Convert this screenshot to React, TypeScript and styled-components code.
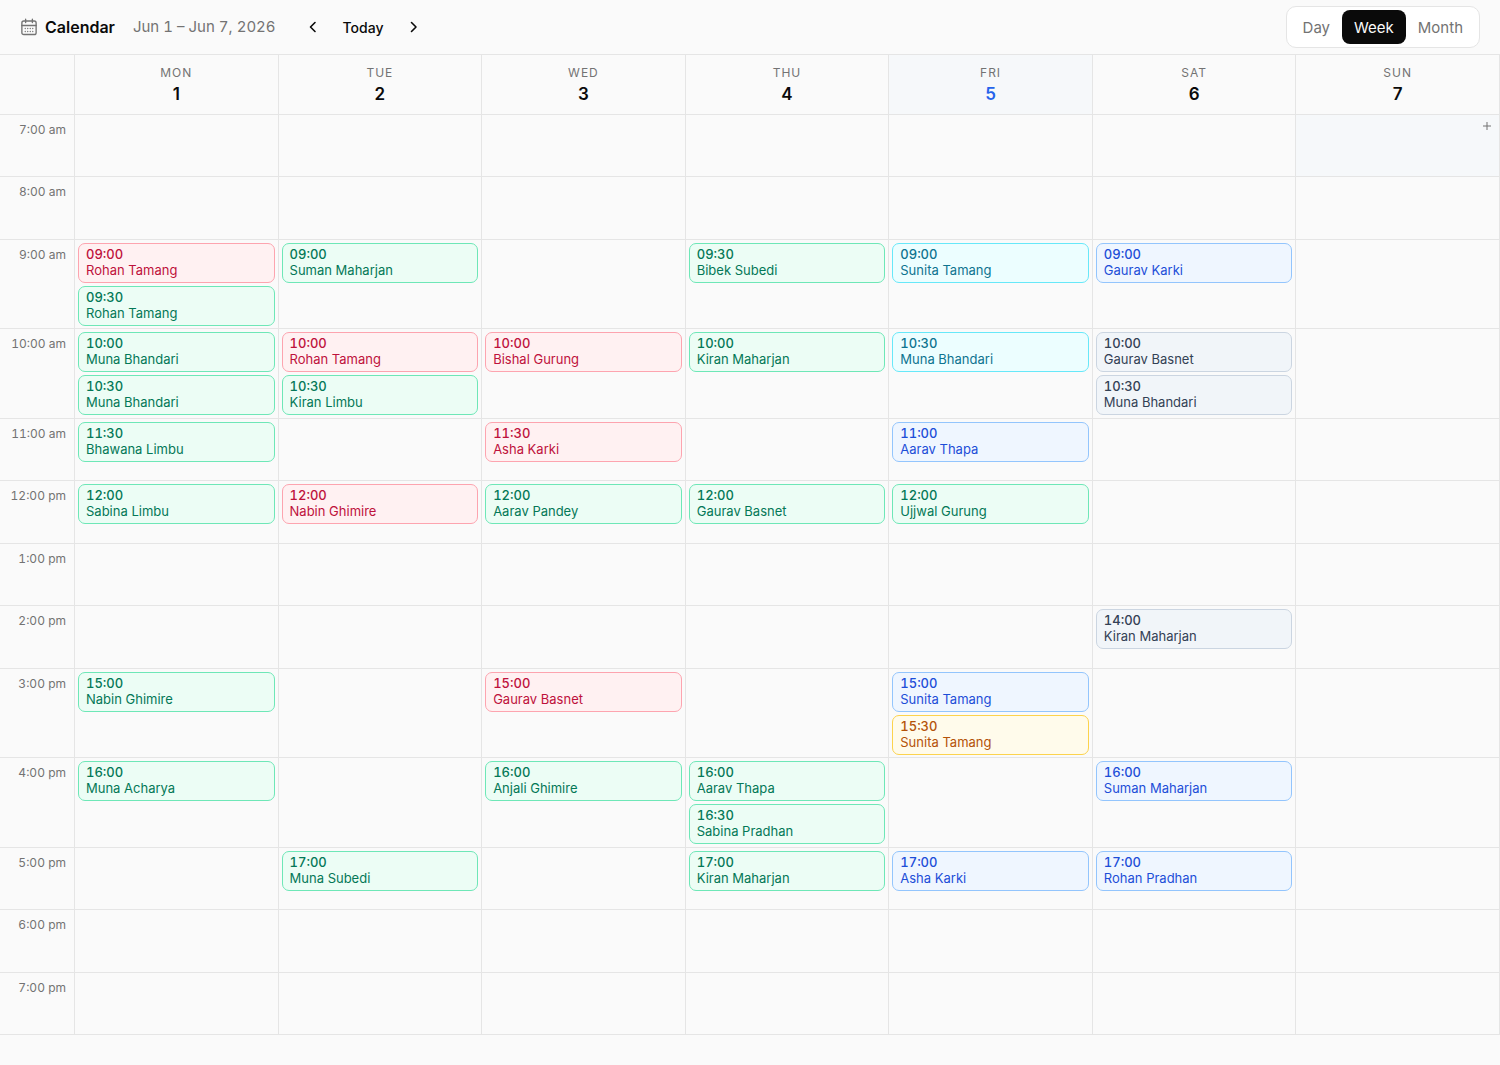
import React from "react";
import styled, { createGlobalStyle } from "styled-components";

const GlobalStyle = createGlobalStyle`
  *, *::before, *::after { box-sizing: border-box; }
  body {
    margin: 0;
    background: #fafafa;
    color: #0a0a0a;
    font-family: Inter, "Liberation Sans", sans-serif;
    font-size: 13px;
    -webkit-font-smoothing: antialiased;
  }
  button { font: inherit; color: inherit; }
`;

type Tone = "rose" | "emerald" | "cyan" | "blue" | "slate" | "amber";

const tones: Record<Tone, { bg: string; border: string; text: string }> = {
  rose: { bg: "#fff1f2", border: "#fda4af", text: "#be123c" },
  emerald: { bg: "#ecfdf5", border: "#6ee7b7", text: "#047857" },
  cyan: { bg: "#ecfeff", border: "#67e8f9", text: "#0e7490" },
  blue: { bg: "#eff6ff", border: "#93c5fd", text: "#1d4ed8" },
  slate: { bg: "#f1f5f9", border: "#cbd5e1", text: "#334155" },
  amber: { bg: "#fffbeb", border: "#fcd34d", text: "#b45309" },
};

const Page = styled.main`
  display: flex;
  flex-direction: column;
  min-height: 100vh;
  padding-bottom: 30px;
`;

const Toolbar = styled.header`
  display: flex;
  align-items: center;
  height: 55px;
  padding: 0 20px;
  border-bottom: 1px solid #e5e5e5;
`;

const Title = styled.h1`
  display: flex;
  align-items: center;
  gap: 7px;
  margin: 0 18px 0 0;
  font-size: 16px;
  font-weight: 600;
  line-height: 24px;
`;

const Range = styled.span`
  margin-right: 20px;
  font-size: 15px;
  font-variant-numeric: tabular-nums;
  line-height: 24px;
  color: #737373;
`;

const Stepper = styled.nav`
  display: flex;
  align-items: center;
  gap: 3px;
`;

const IconButton = styled.button`
  display: grid;
  place-items: center;
  width: 34px;
  height: 34px;
  padding: 0;
  border: 0;
  border-radius: 8px;
  background: transparent;
`;

const TodayButton = styled.button`
  height: 34px;
  padding: 0 10px;
  border: 0;
  border-radius: 8px;
  background: transparent;
  font-size: 14px;
  font-weight: 500;
`;

const Segments = styled.div`
  display: flex;
  margin-left: auto;
  padding: 3px 4px;
  border: 1px solid #e5e5e5;
  border-radius: 10px;
  background: #fff;
`;

const Segment = styled.button<{ $active?: boolean }>`
  height: 34px;
  padding: 0 12px;
  border: 0;
  border-radius: 8px;
  background: ${(p) => (p.$active ? "#0a0a0a" : "transparent")};
  color: ${(p) => (p.$active ? "#fafafa" : "#737373")};
  font-size: 15px;
`;

const columns = "75px repeat(7, minmax(0, 1fr))";

const DayRow = styled.div`
  display: grid;
  grid-template-columns: ${columns};
  height: 60px;
  border-bottom: 1px solid #e5e5e5;
`;

const DayHead = styled.div<{ $today?: boolean }>`
  display: flex;
  flex-direction: column;
  align-items: center;
  padding-top: 9px;
  border-right: 1px solid #e5e5e5;
  background: ${(p) => (p.$today ? "#f6f8fa" : "transparent")};
  color: ${(p) => (p.$today ? "#2563eb" : "#0a0a0a")};
`;

const DayName = styled.span`
  font-size: 12px;
  line-height: 17px;
  letter-spacing: 1px;
  text-transform: uppercase;
  color: #737373;
`;

const DayNumber = styled.span`
  font-size: 17px;
  font-weight: 600;
  line-height: 26px;
`;

const Schedule = styled.div<{ $rows: string }>`
  display: grid;
  flex: 1;
  grid-template-columns: ${columns};
  grid-template-rows: ${(p) => p.$rows};
`;

const HourLabel = styled.div`
  padding: 6px 8px 0 0;
  border: solid #e5e5e5;
  border-width: 0 1px 1px 0;
  text-align: right;
  font-size: 12px;
  font-variant-numeric: tabular-nums;
  line-height: 18px;
  color: #737373;
`;

const Slot = styled.div<{ $hover?: boolean }>`
  display: flex;
  flex-direction: column;
  gap: 3px;
  padding: 3px 3px 2px;
  border: solid #e5e5e5;
  border-width: 0 1px 1px 0;
  background: ${(p) => (p.$hover ? "#f6f8fa" : "transparent")};
`;

const AddButton = styled.button`
  display: grid;
  place-items: center;
  align-self: flex-end;
  width: 18px;
  height: 16px;
  padding: 0;
  border: 0;
  background: transparent;
  color: #737373;
`;

const Event = styled.button<{ $tone: Tone }>`
  display: block;
  width: 100%;
  padding: 2px 7px 4px;
  border: 1px solid ${(p) => tones[p.$tone].border};
  border-radius: 7px;
  background: ${(p) => tones[p.$tone].bg};
  color: ${(p) => tones[p.$tone].text};
  font-size: 13px;
  line-height: 16px;
  text-align: left;
`;

const EventTime = styled.span`
  display: block;
  font-weight: 500;
  font-variant-numeric: tabular-nums;
`;

const EventName = styled.span`
  display: block;
  overflow: hidden;
  text-overflow: ellipsis;
  white-space: nowrap;
`;

const days = ["Mon", "Tue", "Wed", "Thu", "Fri", "Sat", "Sun"];

const hours = [7, 8, 9, 10, 11, 12, 13, 14, 15, 16, 17, 18, 19];

type Booking = [day: number, time: string, name: string, tone: Tone];

const bookings: Booking[] = [
  [0, "09:00", "Rohan Tamang", "rose"],
  [0, "09:30", "Rohan Tamang", "emerald"],
  [0, "10:00", "Muna Bhandari", "emerald"],
  [0, "10:30", "Muna Bhandari", "emerald"],
  [0, "11:30", "Bhawana Limbu", "emerald"],
  [0, "12:00", "Sabina Limbu", "emerald"],
  [0, "15:00", "Nabin Ghimire", "emerald"],
  [0, "16:00", "Muna Acharya", "emerald"],
  [1, "09:00", "Suman Maharjan", "emerald"],
  [1, "10:00", "Rohan Tamang", "rose"],
  [1, "10:30", "Kiran Limbu", "emerald"],
  [1, "12:00", "Nabin Ghimire", "rose"],
  [1, "17:00", "Muna Subedi", "emerald"],
  [2, "10:00", "Bishal Gurung", "rose"],
  [2, "11:30", "Asha Karki", "rose"],
  [2, "12:00", "Aarav Pandey", "emerald"],
  [2, "15:00", "Gaurav Basnet", "rose"],
  [2, "16:00", "Anjali Ghimire", "emerald"],
  [3, "09:30", "Bibek Subedi", "emerald"],
  [3, "10:00", "Kiran Maharjan", "emerald"],
  [3, "12:00", "Gaurav Basnet", "emerald"],
  [3, "16:00", "Aarav Thapa", "emerald"],
  [3, "16:30", "Sabina Pradhan", "emerald"],
  [3, "17:00", "Kiran Maharjan", "emerald"],
  [4, "09:00", "Sunita Tamang", "cyan"],
  [4, "10:30", "Muna Bhandari", "cyan"],
  [4, "11:00", "Aarav Thapa", "blue"],
  [4, "12:00", "Ujjwal Gurung", "emerald"],
  [4, "15:00", "Sunita Tamang", "blue"],
  [4, "15:30", "Sunita Tamang", "amber"],
  [4, "17:00", "Asha Karki", "blue"],
  [5, "09:00", "Gaurav Karki", "blue"],
  [5, "10:00", "Gaurav Basnet", "slate"],
  [5, "10:30", "Muna Bhandari", "slate"],
  [5, "14:00", "Kiran Maharjan", "slate"],
  [5, "16:00", "Suman Maharjan", "blue"],
  [5, "17:00", "Rohan Pradhan", "blue"],
];

const at = (day: number, hour: number) =>
  bookings.filter((b) => b[0] === day && parseInt(b[1], 10) === hour);

// Hours in which some day holds two bookings get a taller share of the grid.
const rowTemplate = hours
  .map((h) => (days.some((_, d) => at(d, h).length > 1) ? "89fr" : "62fr"))
  .join(" ");

const hourText = (h: number) => `${h > 12 ? h - 12 : h}:00 ${h < 12 ? "am" : "pm"}`;

const CalendarIcon = () => (
  <svg width="18" height="18" viewBox="0 0 24 24" fill="none" stroke="#737373" strokeWidth="1.8" strokeLinecap="round" strokeLinejoin="round" aria-hidden="true">
    <rect x="2.5" y="4" width="19" height="18" rx="2.5" />
    <path d="M2.5 10h19M7.5 1.5v4.5M16.5 1.5v4.5" />
    <path d="M7 14h.01M10.3 14h.01M13.7 14h.01M17 14h.01M7 18h.01M10.3 18h.01M13.7 18h.01M17 18h.01" />
  </svg>
);

const Chevron = ({ d }: { d: string }) => (
  <svg width="16" height="16" viewBox="0 0 16 16" fill="none" stroke="currentColor" strokeWidth="1.6" strokeLinecap="round" strokeLinejoin="round" aria-hidden="true">
    <path d={d} />
  </svg>
);

export default function App() {
  return (
    <Page>
      <GlobalStyle />
      <Toolbar>
        <Title>
          <CalendarIcon />
          Calendar
        </Title>
        <Range>Jun 1 – Jun 7, 2026</Range>
        <Stepper aria-label="Week">
          <IconButton type="button" aria-label="Previous week">
            <Chevron d="M10 3.5 5.5 8l4.5 4.5" />
          </IconButton>
          <TodayButton type="button">Today</TodayButton>
          <IconButton type="button" aria-label="Next week">
            <Chevron d="M5.5 3.5 10 8l-4.5 4.5" />
          </IconButton>
        </Stepper>
        <Segments role="group" aria-label="View">
          <Segment type="button">Day</Segment>
          <Segment type="button" $active aria-pressed="true">Week</Segment>
          <Segment type="button">Month</Segment>
        </Segments>
      </Toolbar>
      <DayRow>
        <DayHead />
        {days.map((name, i) => (
          <DayHead key={name} $today={i === 4}>
            <DayName>{name}</DayName>
            <DayNumber>{i + 1}</DayNumber>
          </DayHead>
        ))}
      </DayRow>
      <Schedule $rows={rowTemplate}>
        {hours.map((h) => (
          <React.Fragment key={h}>
            <HourLabel>{hourText(h)}</HourLabel>
            {days.map((name, d) => {
              const hovered = d === 6 && h === 7;
              return (
                <Slot key={name} $hover={hovered}>
                  {at(d, h).map(([, time, who, tone]) => (
                    <Event key={time} type="button" $tone={tone}>
                      <EventTime>{time}</EventTime>
                      <EventName>{who}</EventName>
                    </Event>
                  ))}
                  {hovered && (
                    <AddButton type="button" aria-label="Add booking">
                      <svg width="10" height="10" viewBox="0 0 10 10" stroke="currentColor" aria-hidden="true">
                        <path d="M5 1v8M1 5h8" />
                      </svg>
                    </AddButton>
                  )}
                </Slot>
              );
            })}
          </React.Fragment>
        ))}
      </Schedule>
    </Page>
  );
}
